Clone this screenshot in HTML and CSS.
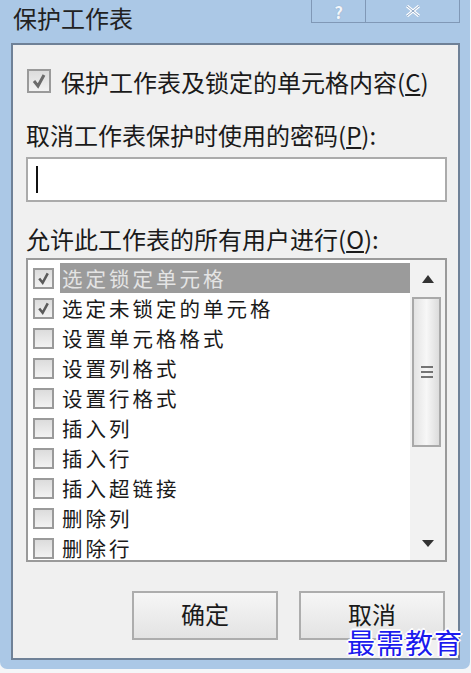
FILE: index.html
```html
<!DOCTYPE html>
<html lang="zh-CN">
<head>
  <meta charset="UTF-8" />
  <title>保护工作表</title>
  <link rel="stylesheet" href="styles.css">
</head>
<body>
  <div class="window">
    <div class="titlebar">
      <span class="title">保护工作表</span>
      <div class="caption-buttons">
        <span class="cap-btn help">?</span>
        <span class="cap-btn close">
          <svg width="16" height="12" viewBox="0 0 16 12"><path d="M2 1 L14 11 M14 1 L2 11" stroke="#fff" stroke-width="3"/><path d="M2 1 L14 11 M14 1 L2 11" stroke="#8ea6c4" stroke-width="1"/></svg>
        </span>
      </div>
    </div>

    <div class="panel">
      <div class="check-row main-check">
        <span class="box"><svg viewBox="0 0 20 20"><path d="M5 10 L9 15 L15 4" fill="none" stroke="#6a6a6a" stroke-width="3"/></svg></span>
        <span>保护工作表及锁定的单元格内容(<u>C</u>)</span>
      </div>

      <div class="field-label">取消工作表保护时使用的密码(<u>P</u>):</div>
      <div class="password"><span class="caret"></span></div>

      <div class="field-label">允许此工作表的所有用户进行(<u>O</u>):</div>
      <div class="listbox">
        <ul class="items">
          <li class="selected"><span class="box"><svg viewBox="0 0 20 20"><path d="M5 10 L9 15 L15 4" fill="none" stroke="#5a5a5a" stroke-width="3"/></svg></span><span class="text">选定锁定单元格</span></li>
          <li><span class="box"><svg viewBox="0 0 20 20"><path d="M5 10 L9 15 L15 4" fill="none" stroke="#5a5a5a" stroke-width="3"/></svg></span><span class="text">选定未锁定的单元格</span></li>
          <li><span class="box"></span><span class="text">设置单元格格式</span></li>
          <li><span class="box"></span><span class="text">设置列格式</span></li>
          <li><span class="box"></span><span class="text">设置行格式</span></li>
          <li><span class="box"></span><span class="text">插入列</span></li>
          <li><span class="box"></span><span class="text">插入行</span></li>
          <li><span class="box"></span><span class="text">插入超链接</span></li>
          <li><span class="box"></span><span class="text">删除列</span></li>
          <li><span class="box"></span><span class="text">删除行</span></li>
        </ul>
        <div class="scrollbar">
          <div class="arrow up"></div>
          <div class="thumb"><span class="grip"></span></div>
          <div class="track"></div>
          <div class="arrow down"></div>
        </div>
      </div>

      <div class="actions">
        <button class="btn">确定</button>
        <button class="btn">取消</button>
      </div>
    </div>

    <div class="watermark">最需教育</div>
  </div>
</body>
</html>
```

FILE: styles.css
```css
body {
  margin: 0;
  background: #f4f6f8;
  font-family: "Noto Sans CJK SC", "Noto Sans", sans-serif;
  color: #1a1a1a;
}
.window {
  position: relative;
  width: 470px;
  height: 669px;
  background: #abc8e6;
  border-radius: 0 0 7px 7px;
}
.titlebar {
  display: flex;
  justify-content: space-between;
  height: 43px;
  padding: 0 10px 0 13px;
}
.title {
  font-size: 24px;
  line-height: 35px;
  color: #222;
}
.caption-buttons {
  display: flex;
  height: 23px;
  border: 1px solid #8098b6;
  border-top: none;
  box-sizing: border-box;
}
.cap-btn {
  display: flex;
  align-items: center;
  justify-content: center;
  height: 22px;
  color: #f2f6fb;
  font-size: 17px;
  font-weight: bold;
}
.cap-btn.help {
  width: 53px;
  border-right: 1px solid #8098b6;
  text-shadow: 0 0 1px #7e95b3;
}
.cap-btn.close {
  width: 93px;
}
.panel {
  box-sizing: border-box;
  margin: 0 10px 0 11px;
  height: 617px;
  background: #f0f0f0;
  border: 2px solid #6f8197;
  padding: 0 11px 0 13px;
}
.box {
  box-sizing: border-box;
  display: inline-block;
  flex: none;
  width: 22px;
  height: 22px;
  border: 2px solid #9a9a9a;
  background: linear-gradient(#dcdcdc, #f2f2f2);
}
.box svg {
  display: block;
  width: 100%;
  height: 100%;
}
.check-row {
  display: flex;
  align-items: center;
  gap: 10px;
}
.main-check {
  margin-top: 23px;
  height: 26px;
  padding-left: 1px;
  font-size: 24px;
}
.main-check .box {
  width: 24px;
  height: 24px;
}
.field-label {
  font-size: 24px;
  line-height: 26px;
}
.main-check + .field-label {
  margin-top: 28px;
}
.password {
  box-sizing: border-box;
  margin-top: 9px;
  height: 45px;
  background: #fff;
  border: 2px solid #ababab;
  padding: 7px 0 0 8px;
}
.caret {
  display: block;
  width: 2px;
  height: 27px;
  background: #111;
}
.password + .field-label {
  margin-top: 24px;
}
.listbox {
  box-sizing: border-box;
  display: flex;
  margin-top: 6px;
  height: 304px;
  background: #fff;
  border: 2px solid #9a9a9a;
}
.items {
  flex: 1;
  list-style: none;
  margin: 0;
  padding: 3px 0 0 5px;
}
.items li {
  display: flex;
  align-items: center;
  height: 30px;
  font-size: 20.5px;
  letter-spacing: 3px;
}
.items .box {
  width: 21px;
  height: 21px;
}
.items .text {
  margin-left: 6px;
  padding-left: 2px;
  flex: 1;
  line-height: 30px;
}
.items li.selected .text {
  background: #9b9b9b;
  color: #e4e4e4;
}
.scrollbar {
  display: flex;
  flex-direction: column;
  width: 35px;
  background: #f2f2f2;
}
.arrow {
  display: flex;
  align-items: center;
  justify-content: center;
  height: 37px;
}
.arrow.up::before {
  content: "";
  border: 6px solid transparent;
  border-bottom: 8px solid #333;
  border-top: none;
}
.arrow.down {
  height: 34px;
}
.arrow.down::before {
  content: "";
  border: 6px solid transparent;
  border-top: 7px solid #333;
  border-bottom: none;
}
.thumb {
  box-sizing: border-box;
  display: flex;
  align-items: center;
  justify-content: center;
  margin-left: 2px;
  width: 29px;
  height: 150px;
  border: 2px solid #a9a9a9;
  background: linear-gradient(90deg, #e3e3e3, #f7f7f7 50%, #dcdcdc);
}
.grip {
  width: 12px;
  height: 13px;
  background: repeating-linear-gradient(#555 0 2px, transparent 2px 5px);
  opacity: 0.8;
}
.track {
  flex: 1;
}
.actions {
  display: flex;
  justify-content: flex-end;
  gap: 21px;
  margin-top: 29px;
  margin-right: 2px;
}
.btn {
  box-sizing: border-box;
  width: 146px;
  height: 49px;
  border: 2px solid #adadad;
  background: linear-gradient(#f6f6f6, #e3e3e3);
  font-family: inherit;
  font-size: 24px;
  line-height: 30px;
  color: #1a1a1a;
  padding: 0 0 4px;
}
.watermark {
  position: absolute;
  right: 7px;
  bottom: 11px;
  font-family: "Noto Sans CJK SC", serif;
  font-size: 28px;
  line-height: 32px;
  letter-spacing: 1px;
  color: #1a1aee;
  text-shadow: 2px 0 0 #fff, -2px 0 0 #fff, 0 2px 0 #fff, 0 -2px 0 #fff, 1px 1px 0 #fff, -1px -1px 0 #fff;
}
```
